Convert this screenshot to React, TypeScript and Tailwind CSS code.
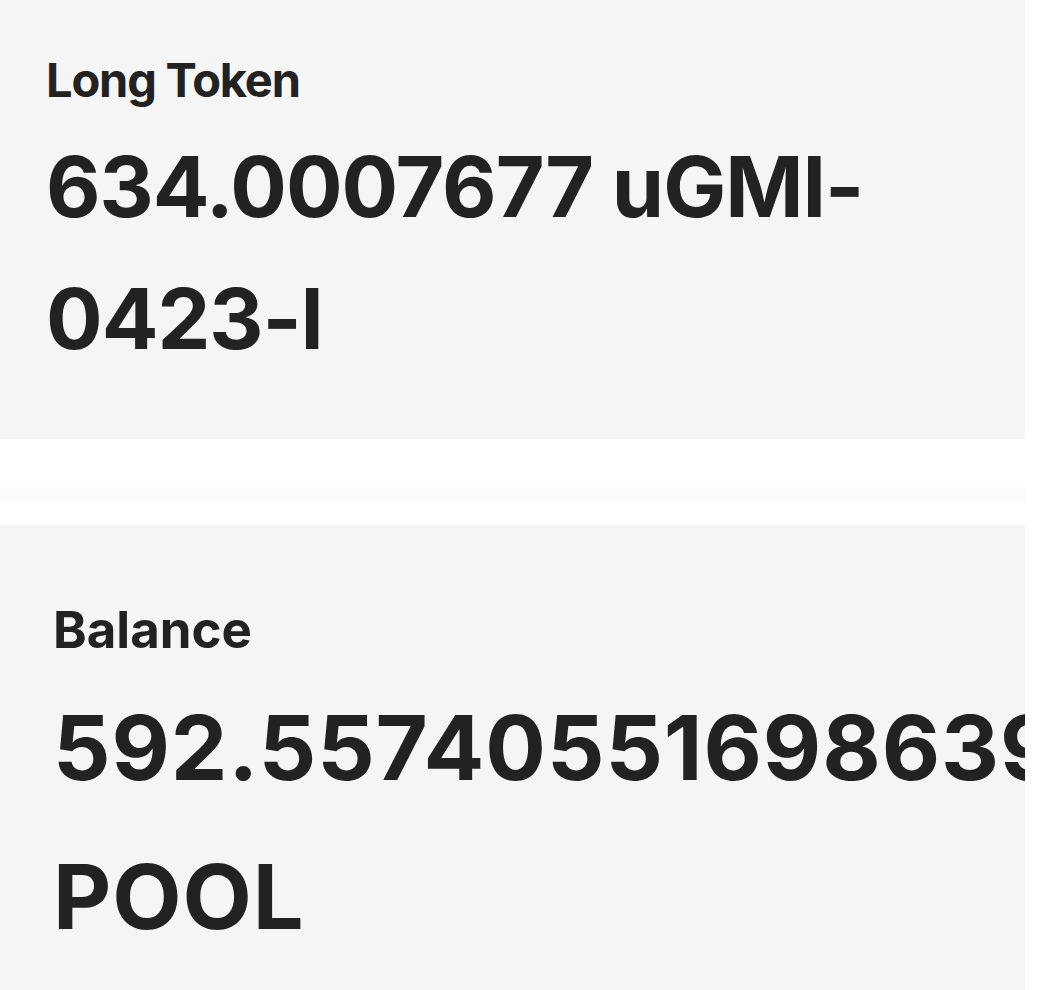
import React from 'react';

interface StatProps {
  label: string;
  value: string;
  scale: 'sm' | 'lg';
}

const Stat: React.FC<StatProps> = ({ label, value, scale }) => {
  if (scale === 'sm') {
    return (
      <div className="w-[1025px] overflow-hidden bg-[#f5f5f5] pl-[46px] pt-[45px] pb-[54px]">
        <div className="text-[47px] leading-[70px] font-bold tracking-[-0.025em] text-[#222222]">{label}</div>
        <div className="mt-[6px] text-[84px] leading-[132px] font-bold tracking-[-0.012em] text-[#222222] break-words">
          {value}
        </div>
      </div>
    );
  }
  return (
    <div className="w-[1025px] overflow-hidden bg-[#f5f5f5] pl-[53px] pt-[67px] pb-[30px]">
      <div className="text-[51px] leading-[76px] font-bold tracking-normal text-[#222222]">{label}</div>
      <div className="mt-[5px] text-[90px] leading-[149px] font-bold tracking-[0.01em] text-[#222222] whitespace-normal">
        {value}
      </div>
    </div>
  );
};

export default function App() {
  return (
    <div className="min-h-[990px] w-[1040px] overflow-hidden bg-white" style={{ fontFamily: 'Inter, "Liberation Sans", sans-serif' }}>
      <Stat scale="sm" label="Long Token" value="634.0007677 uGMI-0423-l" />
      <div className="h-[48px]" />
      <div className="h-[15px] w-[1025px] bg-[#fbfbfb]" />
      <div className="h-[23px]" />
      <Stat scale="lg" label="Balance" value="592.557405516986396 POOL" />
    </div>
  );
}
